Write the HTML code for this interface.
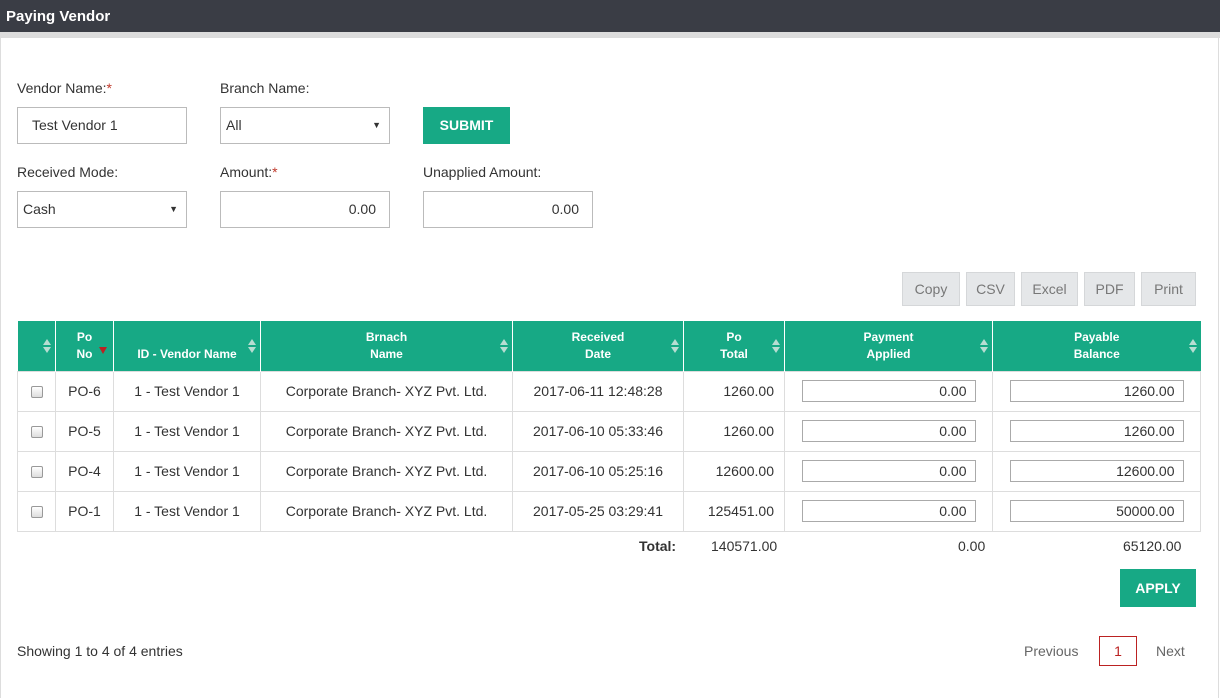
<!DOCTYPE html>
<html><head><style>
*{box-sizing:border-box;margin:0;padding:0}
body{width:1220px;height:688px;position:relative;background:#fff;font-family:"Liberation Sans",sans-serif;font-size:14px;color:#333;overflow:hidden}
.a{position:absolute}
.hdr{left:0;top:0;width:1220px;height:32px;background:#3a3d45;color:#fff;font-weight:bold;font-size:15px;line-height:33px;padding-left:6px}
.strip{left:0;top:32px;width:1220px;height:6px;background:#dcdcdc}
.panel{left:0;top:38px;width:1219px;height:660px;border-left:1px solid #ddd;border-right:1px solid #ddd}
.lbl{font-size:14px;color:#333}
.req{color:#c0392b}
.inp{border:1px solid #bbb;height:37px;line-height:35px;padding:0 10px;font-size:14px;background:#fff}
.btn{background:#17a985;color:#fff;font-weight:bold;text-align:center;font-size:14px}
.eb{top:272px;height:34px;line-height:33px;background:#e5e7e9;border:1px solid #d5d7d9;color:#777;text-align:center;font-size:14px}
table{position:absolute;left:17px;top:321px;border-collapse:collapse;width:1184px;font-size:14px}
th{background:#17a985;color:#fff;font-size:12px;font-weight:bold;height:50px;border-left:1px solid #fff;position:relative;line-height:17px;vertical-align:middle}
th:first-child{border-left:none}
td{height:40px;border:1px solid #ddd;text-align:center;color:#333}
.s{position:absolute;right:5px;top:18px;width:7px;height:14px}
.s:before{content:"";position:absolute;left:0;top:0;border-left:4px solid transparent;border-right:4px solid transparent;border-bottom:6px solid #b7ddd2}
.s:after{content:"";position:absolute;left:0;top:8px;border-left:4px solid transparent;border-right:4px solid transparent;border-top:6px solid #b7ddd2}
.cb{display:inline-block;width:12px;height:12px;border:1px solid #999;border-radius:2px;background:linear-gradient(#fff,#ddd);vertical-align:middle}
.ti{display:inline-block;border:1px solid #aaa;height:22px;line-height:20px;text-align:right;padding-right:8px;vertical-align:middle;width:174px}
.r{text-align:right;padding-right:10px}
</style></head><body>
<div class="a hdr">Paying Vendor</div>
<div class="a strip"></div>
<div class="a panel"></div>

<div class="a lbl" style="left:17px;top:80px">Vendor Name:<span class="req">*</span></div>
<div class="a lbl" style="left:220px;top:80px">Branch Name:</div>
<div class="a inp" style="left:17px;top:107px;width:170px;padding-left:14px">Test Vendor 1</div>
<div class="a inp" style="left:220px;top:107px;width:170px;padding-left:5px">All<span style="position:absolute;right:8px;font-size:9px">▼</span></div>
<div class="a btn" style="left:423px;top:107px;width:87px;height:37px;line-height:37px">SUBMIT</div>

<div class="a lbl" style="left:17px;top:164px">Received Mode:</div>
<div class="a lbl" style="left:220px;top:164px">Amount:<span class="req">*</span></div>
<div class="a lbl" style="left:423px;top:164px">Unapplied Amount:</div>
<div class="a inp" style="left:17px;top:191px;width:170px;padding-left:5px">Cash<span style="position:absolute;right:8px;font-size:9px">▼</span></div>
<div class="a inp" style="left:220px;top:191px;width:170px;text-align:right;padding-right:13px">0.00</div>
<div class="a inp" style="left:423px;top:191px;width:170px;text-align:right;padding-right:13px">0.00</div>

<div class="a eb" style="left:902px;width:58px">Copy</div>
<div class="a eb" style="left:966px;width:49px">CSV</div>
<div class="a eb" style="left:1021px;width:57px">Excel</div>
<div class="a eb" style="left:1084px;width:51px">PDF</div>
<div class="a eb" style="left:1141px;width:55px">Print</div>

<table>
<tr>
<th style="width:38px"><span class="s"></span></th>
<th style="width:58px">Po<br>No<span style="position:absolute;right:6px;top:26px;border-left:4px solid transparent;border-right:4px solid transparent;border-top:7px solid #b22"></span></th>
<th style="width:147px;padding-top:17px">ID - Vendor Name<span class="s"></span></th>
<th style="width:252px">Brnach<br>Name<span class="s"></span></th>
<th style="width:171px">Received<br>Date<span class="s"></span></th>
<th style="width:101px">Po<br>Total<span class="s"></span></th>
<th style="width:208px">Payment<br>Applied<span class="s"></span></th>
<th style="width:208px">Payable<br>Balance<span class="s"></span></th>
</tr>
<tr><td><span class="cb"></span></td><td>PO-6</td><td>1 - Test Vendor 1</td><td>Corporate Branch- XYZ Pvt. Ltd.</td><td>2017-06-11 12:48:28</td><td class="r">1260.00</td><td><span class="ti">0.00</span></td><td><span class="ti">1260.00</span></td></tr>
<tr><td><span class="cb"></span></td><td>PO-5</td><td>1 - Test Vendor 1</td><td>Corporate Branch- XYZ Pvt. Ltd.</td><td>2017-06-10 05:33:46</td><td class="r">1260.00</td><td><span class="ti">0.00</span></td><td><span class="ti">1260.00</span></td></tr>
<tr><td><span class="cb"></span></td><td>PO-4</td><td>1 - Test Vendor 1</td><td>Corporate Branch- XYZ Pvt. Ltd.</td><td>2017-06-10 05:25:16</td><td class="r">12600.00</td><td><span class="ti">0.00</span></td><td><span class="ti">12600.00</span></td></tr>
<tr><td><span class="cb"></span></td><td>PO-1</td><td>1 - Test Vendor 1</td><td>Corporate Branch- XYZ Pvt. Ltd.</td><td>2017-05-25 03:29:41</td><td class="r">125451.00</td><td><span class="ti">0.00</span></td><td><span class="ti">50000.00</span></td></tr>
</table>

<div class="a" style="left:639px;top:538px;font-weight:bold">Total:</div>
<div class="a" style="left:711px;top:538px">140571.00</div>
<div class="a" style="left:958px;top:538px">0.00</div>
<div class="a" style="left:1123px;top:538px">65120.00</div>

<div class="a btn" style="left:1120px;top:569px;width:76px;height:38px;line-height:38px">APPLY</div>

<div class="a" style="left:17px;top:643px">Showing 1 to 4 of 4 entries</div>
<div class="a" style="left:1024px;top:643px;color:#666">Previous</div>
<div class="a" style="left:1099px;top:636px;width:38px;height:30px;border:1px solid #b22;color:#b22;text-align:center;line-height:29px">1</div>
<div class="a" style="left:1156px;top:643px;color:#666">Next</div>
</body></html>
